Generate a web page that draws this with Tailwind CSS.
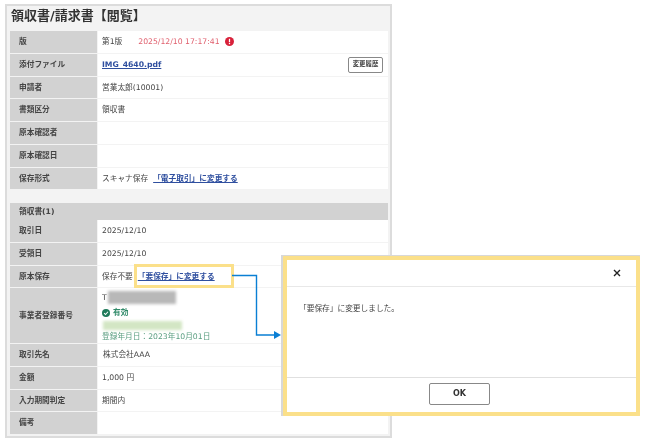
<!DOCTYPE html>
<html lang="ja">
<head>
<meta charset="UTF-8" />
<title>領収書/請求書【閲覧】</title>
<script src="https://cdn.jsdelivr.net/npm/@tailwindcss/browser@4"></script>
</head>
<body class="bg-white">
<div class="relative w-[647px] h-[442px] overflow-hidden bg-white blur-[0.35px] text-[7.7px] text-[#444] font-['DejaVu_Sans','Noto_Sans_CJK_JP',sans-serif]">
  <!-- main card -->
  <div class="absolute left-[5px] top-[4px] w-[387px] h-[434px] border-2 border-[#dcdcdc] bg-[#f3f3f3] pl-[3px] pr-[2px]">
    <h1 class="h-[25px] pl-[1px] pb-[6px] flex items-center text-[13px] font-bold text-[#333]">領収書/請求書【閲覧】</h1>

    <div class="flex flex-col gap-[1px]">
      <div class="flex h-[21.75px]">
        <div class="w-[87px] bg-[#d2d2d2] pl-[9px] flex items-center font-bold">版</div>
        <div class="flex-1 ml-[1px] bg-white pl-[4px] flex items-center">
          第1版
          <span class="ml-[16px] text-[#e0606e]">2025/12/10 17:17:41</span>
          <svg class="ml-[5px] w-[9px] h-[9px]" viewBox="0 0 10 10"><circle cx="5" cy="5" r="5" fill="#d8213a"/><rect x="4.3" y="2" width="1.4" height="3.8" fill="#fff"/><rect x="4.3" y="6.6" width="1.4" height="1.4" fill="#fff"/></svg>
        </div>
      </div>
      <div class="flex h-[21.75px]">
        <div class="w-[87px] bg-[#d2d2d2] pl-[9px] flex items-center font-bold">添付ファイル</div>
        <div class="flex-1 ml-[1px] bg-white pl-[4px] pr-[5px] flex items-center justify-between">
          <a class="font-bold underline text-[#2f4f9f]">IMG_4640.pdf</a>
          <button class="w-[35px] h-[16px] border border-[#888] rounded-[2px] bg-white text-[6.4px] font-bold">変更履歴</button>
        </div>
      </div>
      <div class="flex h-[21.75px]">
        <div class="w-[87px] bg-[#d2d2d2] pl-[9px] flex items-center font-bold">申請者</div>
        <div class="flex-1 ml-[1px] bg-white pl-[4px] flex items-center">営業太郎(10001)</div>
      </div>
      <div class="flex h-[21.75px]">
        <div class="w-[87px] bg-[#d2d2d2] pl-[9px] flex items-center font-bold">書類区分</div>
        <div class="flex-1 ml-[1px] bg-white pl-[4px] flex items-center">領収書</div>
      </div>
      <div class="flex h-[21.75px]">
        <div class="w-[87px] bg-[#d2d2d2] pl-[9px] flex items-center font-bold">原本確認者</div>
        <div class="flex-1 ml-[1px] bg-white"></div>
      </div>
      <div class="flex h-[21.75px]">
        <div class="w-[87px] bg-[#d2d2d2] pl-[9px] flex items-center font-bold">原本確認日</div>
        <div class="flex-1 ml-[1px] bg-white"></div>
      </div>
      <div class="flex h-[21.75px]">
        <div class="w-[87px] bg-[#d2d2d2] pl-[9px] flex items-center font-bold">保存形式</div>
        <div class="flex-1 ml-[1px] bg-white pl-[4px] flex items-center">
          スキャナ保存
          <a class="ml-[5px] font-bold underline text-[#2f4f9f]">「電子取引」に変更する</a>
        </div>
      </div>
    </div>

    <div class="mt-[13.75px] h-[17px] bg-[#d2d2d2] pl-[9px] flex items-center font-bold">領収書(1)</div>

    <div class="flex flex-col gap-[1px]">
      <div class="flex h-[21.75px]">
        <div class="w-[87px] bg-[#d2d2d2] pl-[9px] flex items-center font-bold">取引日</div>
        <div class="flex-1 ml-[1px] bg-white pl-[4px] flex items-center">2025/12/10</div>
      </div>
      <div class="flex h-[21.75px]">
        <div class="w-[87px] bg-[#d2d2d2] pl-[9px] flex items-center font-bold">受領日</div>
        <div class="flex-1 ml-[1px] bg-white pl-[4px] flex items-center">2025/12/10</div>
      </div>
      <div class="flex h-[21.75px]">
        <div class="w-[87px] bg-[#d2d2d2] pl-[9px] flex items-center font-bold">原本保存</div>
        <div class="flex-1 ml-[1px] bg-white pl-[4px] flex items-center">
          保存不要
          <a class="ml-[5px] font-bold underline text-[#2f4f9f]">「要保存」に変更する</a>
        </div>
      </div>
      <div class="flex h-[54.75px]">
        <div class="w-[87px] bg-[#d2d2d2] pl-[9px] flex items-center font-bold">事業者登録番号</div>
        <div class="flex-1 ml-[1px] bg-white pl-[4px] pt-[2px] flex flex-col">
          <div class="h-[15px] flex items-center">T<div class="ml-[1px] w-[68px] h-[13px] bg-[#b8b8b8] blur-[1.5px]"></div></div>
          <div class="h-[15px] flex items-center font-bold text-[#2f8a68]">
            <svg class="mr-[3px] w-[8px] h-[8px]" viewBox="0 0 10 10"><circle cx="5" cy="5" r="5" fill="#1f7a5a"/><path d="M2.6 5.1 L4.4 6.9 L7.5 3.4" fill="none" stroke="#fff" stroke-width="1.3"/></svg>
            有効
          </div>
          <div class="h-[9px] mt-[1px] ml-[1px] w-[79px] bg-[#d3e6c4] blur-[1.5px]"></div>
          <div class="mt-[1px] h-[11px] flex items-center text-[#5a9e80]">登録年月日：2023年10月01日</div>
        </div>
      </div>
      <div class="flex h-[21.75px]">
        <div class="w-[87px] bg-[#d2d2d2] pl-[9px] flex items-center font-bold">取引先名</div>
        <div class="flex-1 ml-[1px] bg-white pl-[5px] flex items-center">株式会社AAA</div>
      </div>
      <div class="flex h-[21.75px]">
        <div class="w-[87px] bg-[#d2d2d2] pl-[9px] flex items-center font-bold">金額</div>
        <div class="flex-1 ml-[1px] bg-white pl-[4px] flex items-center">1,000 円</div>
      </div>
      <div class="flex h-[21.75px]">
        <div class="w-[87px] bg-[#d2d2d2] pl-[9px] flex items-center font-bold">入力期間判定</div>
        <div class="flex-1 ml-[1px] bg-white pl-[4px] flex items-center">期間内</div>
      </div>
      <div class="flex h-[21.75px]">
        <div class="w-[87px] bg-[#d2d2d2] pl-[9px] flex items-center font-bold">備考</div>
        <div class="flex-1 ml-[1px] bg-white"></div>
      </div>
    </div>
  </div>

  <!-- callout highlight -->
  <div class="absolute left-[134px] top-[264px] w-[100px] h-[24px] border-[3px] border-[#fbe08a]"></div>

  <!-- arrow -->
  <svg class="absolute left-[230px] top-[270px] w-[52px] h-[72px]" viewBox="0 0 52 72">
    <path d="M2 5.5 H26.5 V65 H44" fill="none" stroke="#0a7fd4" stroke-width="1.4"/>
    <path d="M44 61 L51 65 L44 69 Z" fill="#0a7fd4"/>
  </svg>

  <!-- modal -->
  <div class="absolute left-[281px] top-[255px] pl-[2px] pt-[1px] bg-[#d8d8d8]">
    <div class="w-[357px] h-[160px] border-[4px] border-[#fbe08a] rounded-[1px] bg-white flex flex-col">
      <div class="h-[27px] border-b border-[#e8e8e8] flex items-center justify-end pr-[15px]">
        <svg class="w-[8px] h-[8px]" viewBox="0 0 8 8"><path d="M1 1 L7 7 M7 1 L1 7" stroke="#222" stroke-width="1.4"/></svg>
      </div>
      <div class="flex-1 pl-[12px] pt-[16px]">「要保存」に変更しました。</div>
      <div class="h-[35px] border-t border-[#e0e0e0] flex items-center justify-center pb-[2px] pr-[4px]">
        <button class="w-[61px] h-[22px] border border-[#888] rounded-[2px] bg-white text-[8px] font-bold text-[#333]">OK</button>
      </div>
    </div>
  </div>
</div>
</body>
</html>
